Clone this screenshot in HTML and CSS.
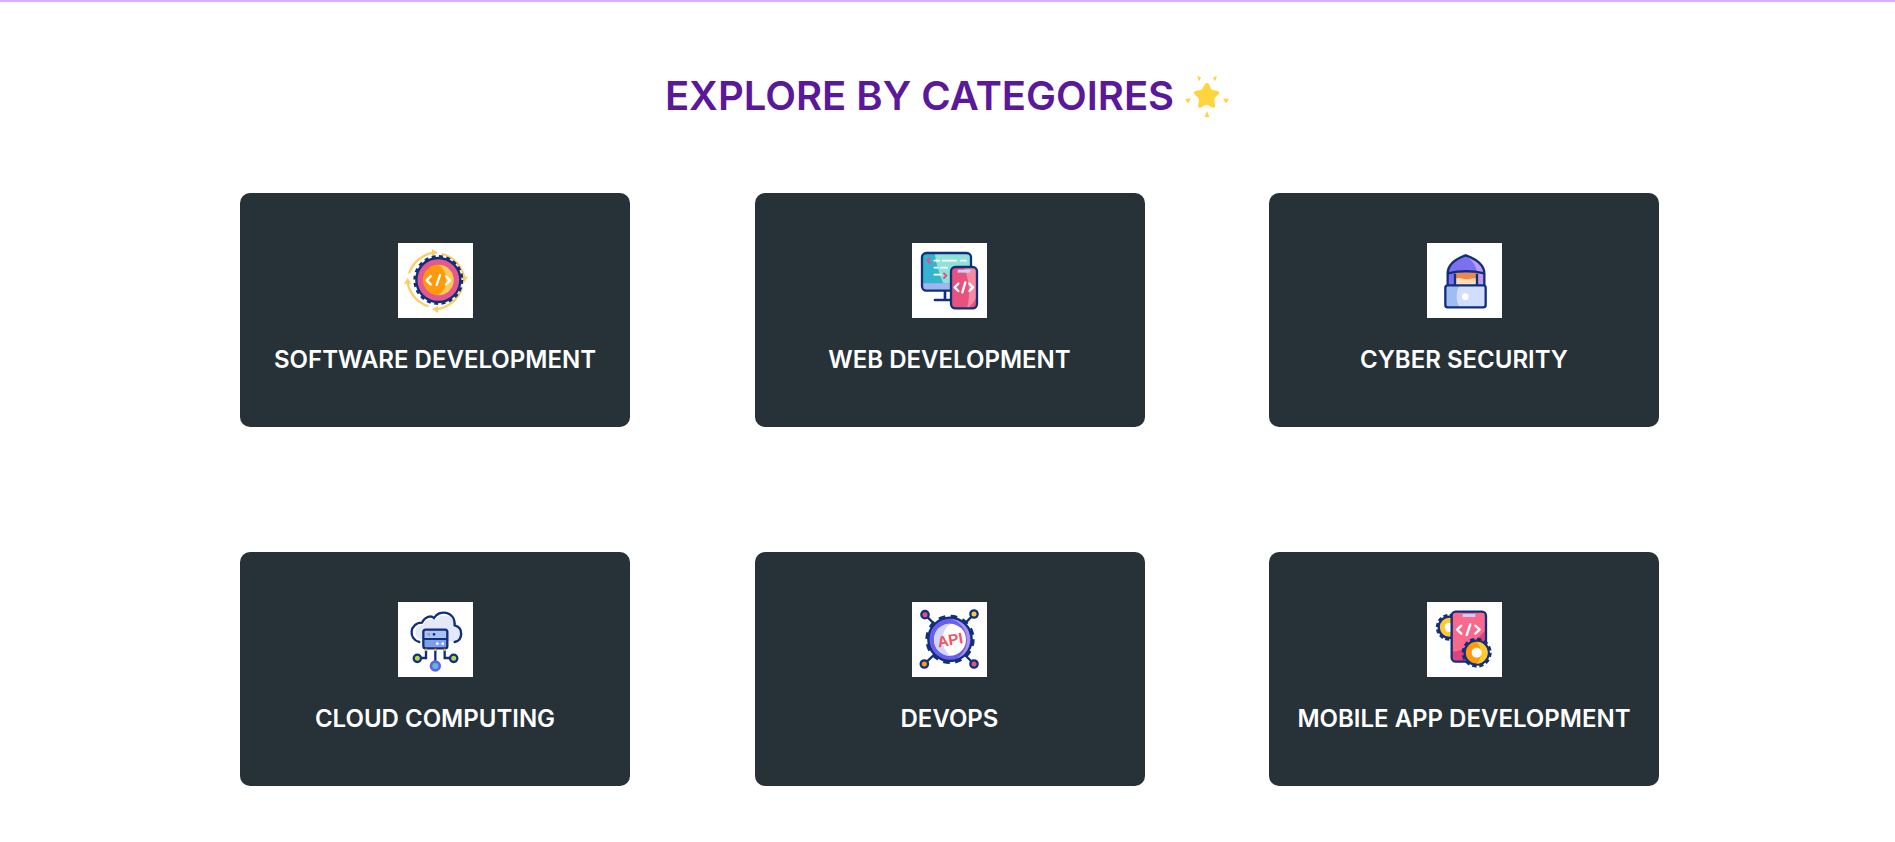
FILE: index.html
```html
<!DOCTYPE html>
<html lang="en">
<head>
<meta charset="utf-8">
<title>Explore by categories</title>
<link rel="stylesheet" href="styles.css">
</head>
<body>
<main class="page">
  <h1 class="title">EXPLORE BY CATEGOIRES
    <svg class="star" viewBox="0 0 46 44" aria-hidden="true">
      <path d="M23 9c2 0 2.500 2 3.500 5 .6 1.500 1.500 2 3 2.200 3 .4 5.500.6 5.800 2.300.2 1.500-2 3-4 5-1.200 1.200-1.300 2-1 3.500.6 3 1.400 5.500 0 6.500-1.400.9-3.500-.8-6-2.200-1.200-.7-2.200-.7-3.400 0-2.500 1.400-4.600 3.100-6 2.200-1.400-1-.6-3.500 0-6.500.3-1.500.2-2.300-1-3.500-2-2-4.200-3.500-4-5 .3-1.700 2.800-1.900 5.800-2.300 1.500-.2 2.400-.7 3-2.200C20.500 11 21 9 23 9z" fill="#ffd53d"/>
      <g fill="#ffd53d"><path d="M13 2l4 1.500-2 4z"/><path d="M33 2l-4 1.500 2 4z"/><path d="M1 25l6-.5-3 5z"/><path d="M45 25l-6-.5 3 5z"/><path d="M23 37l2.500 6h-5z"/></g>
    </svg>
  </h1>
  <section class="grid">
    <article class="card">
      <svg class="icon" viewBox="0 0 225 225" aria-hidden="true">
        <rect width="225" height="225" fill="#fff"/>
        <g fill="none" stroke="#ffcd66" stroke-width="7" stroke-linecap="round">
          <path d="M34 89A92 92 0 0 1 108 29"/><path d="M134 33A92 92 0 0 1 199 104"/><path d="M192 133A92 92 0 0 1 115 199"/><path d="M89 189A92 92 0 0 1 29 120"/>
        </g>
        <g fill="#ffcd66"><path d="M102 18l18 11-18 11z"/><path d="M188 101h22l-11 17z"/><path d="M120 188l-18 11 18 11z"/><path d="M18 122h22l-11-18z"/></g>
        <circle cx="121" cy="111" r="71" fill="none" stroke="#12307a" stroke-width="8" stroke-dasharray="12 10.300"/>
        <circle cx="121" cy="111" r="66" fill="#e4588f" stroke="#12307a" stroke-width="7"/>
        <path d="M170 65a66 66 0 0 1 0 92 66 66 0 0 0 0-92z" fill="#ee6f9b"/>
        <circle cx="121" cy="111" r="46" fill="#ff9a0d"/>
        <path d="M121 65a46 46 0 0 1 0 92c16-10 24-26 24-46s-8-36-24-46z" fill="#ffcb57"/>
        <g fill="none" stroke="#fff" stroke-width="7" stroke-linecap="round" stroke-linejoin="round"><path d="M98 100l-12 12 12 12"/><path d="M144 100l12 12-12 12"/><path d="M126 96l-10 30"/></g>
      </svg>
      <h2 class="label">SOFTWARE DEVELOPMENT</h2>
    </article>
    <article class="card">
      <svg class="icon" viewBox="0 0 225 225" aria-hidden="true">
        <rect width="225" height="225" fill="#fff"/>
        <path d="M99 143v28M69 171h50" stroke="#12307a" stroke-width="8" stroke-linecap="round"/>
        <rect x="30" y="30" width="147" height="113" rx="13" fill="#35b4cf"/>
        <path d="M68 30h96q13 0 13 13v78H94C80 90 72 60 68 30z" fill="#8fe2da"/>
        <path d="M30 121h147v9q0 13-13 13H43q-13 0-13-13z" fill="#a1b5ef"/>
        <rect x="30" y="30" width="147" height="113" rx="13" fill="none" stroke="#12307a" stroke-width="7"/>
        <g fill="none" stroke="#e64f86" stroke-width="6" stroke-linecap="round" stroke-linejoin="round"><path d="M53 46l-7 7 7 7"/><path d="M96 91l7 7-7 7"/></g>
        <g stroke="#fff" stroke-width="5" stroke-linecap="round"><path d="M67 53h15M92 53h40M146 53h16M67 74h10M87 74h18M67 95h20"/></g>
        <rect x="117" y="72" width="78" height="124" rx="13" fill="#e9527f"/>
        <path d="M155 72h27q13 0 13 13v75c-10 20-20 30-30 36 12-40 6-90-10-124z" fill="#f78aa3"/>
        <rect x="117" y="72" width="78" height="124" rx="13" fill="none" stroke="#12307a" stroke-width="7"/>
        <rect x="137" y="80" width="38" height="9" fill="#c7d0f5"/>
        <g fill="none" stroke="#fff" stroke-width="7" stroke-linecap="round" stroke-linejoin="round"><path d="M139 122l-11 11 11 11"/><path d="M172 122l11 11-11 11"/><path d="M160 118l-9 30"/></g>
      </svg>
      <h2 class="label">WEB DEVELOPMENT</h2>
    </article>
    <article class="card">
      <svg class="icon" viewBox="0 0 225 225" aria-hidden="true">
        <rect width="225" height="225" fill="#fff"/>
        <path d="M62 126V92C62 62 90 46 116 37c26 9 56 25 56 55v34z" fill="#7c70f0"/>
        <path d="M116 37c26 9 56 25 56 55v34h-22V92c0-20-14-40-34-55z" fill="#bd9cef"/>
        <path d="M62 126V92C62 62 90 46 116 37c26 9 56 25 56 55v34" fill="none" stroke="#12307a" stroke-width="7"/>
        <rect x="84" y="90" width="66" height="36" fill="#ffdcb5"/>
        <path d="M84 90h66v18c-12-6-20 2-33 1s-20-7-33-1z" fill="#ee8748"/>
        <path d="M62 91c34-8 76-8 110 0" fill="none" stroke="#12307a" stroke-width="7"/>
        <path d="M84 92v34M150 92v34" stroke="#12307a" stroke-width="7"/>
        <rect x="55" y="127" width="121" height="66" rx="7" fill="#d3defc"/>
        <path d="M62 127h36c-12 18-12 48 0 66H62q-7 0-7-7v-52q0-7 7-7z" fill="#9fbdf3"/>
        <rect x="55" y="127" width="121" height="66" rx="7" fill="none" stroke="#12307a" stroke-width="7"/>
        <circle cx="115" cy="161" r="10" fill="#fff"/>
      </svg>
      <h2 class="label">CYBER SECURITY</h2>
    </article>
    <article class="card">
      <svg class="icon" viewBox="0 0 225 225" aria-hidden="true">
        <rect width="225" height="225" fill="#fff"/>
        <path d="M68 112c-24-8-20-42 8-44 10-20 28-18 36-12 12-26 62-20 62 18 22 8 22 38-4 44z" fill="#e3e9fb"/>
        <path d="M64 120C30 112 34 62 72 62 82 42 100 40 108 48c14-26 64-22 62 22 26 6 26 44 0 50" fill="none" stroke="#12307a" stroke-width="7" stroke-linecap="round"/>
        <rect x="76" y="83" width="72" height="56" rx="7" fill="#809fea"/>
        <rect x="76" y="83" width="72" height="28" rx="7" fill="#abc0f3"/>
        <rect x="76" y="83" width="72" height="56" rx="7" fill="none" stroke="#12307a" stroke-width="7"/>
        <path d="M76 111h72" stroke="#12307a" stroke-width="6"/>
        <circle cx="92" cy="97" r="4" fill="#8b95b8"/><circle cx="108" cy="97" r="4" fill="#12307a"/>
        <circle cx="118" cy="125" r="4" fill="#fff"/><circle cx="134" cy="125" r="4" fill="#fff"/>
        <path d="M84 141v27H70M112 141v38M140 141v27h14" fill="none" stroke="#12307a" stroke-width="7"/>
        <path d="M84 140v7M112 140v7M140 140v7" stroke="#ffb52e" stroke-width="7"/>
        <circle cx="58" cy="169" r="11" fill="#b6d63c" stroke="#12307a" stroke-width="7"/>
        <circle cx="167" cy="169" r="11" fill="#b6d63c" stroke="#12307a" stroke-width="7"/>
        <circle cx="112" cy="192" r="13" fill="#4ec3c9" stroke="#6a5de8" stroke-width="8"/>
      </svg>
      <h2 class="label">CLOUD COMPUTING</h2>
    </article>
    <article class="card">
      <svg class="icon" viewBox="0 0 225 225" aria-hidden="true">
        <rect width="225" height="225" fill="#fff"/>
        <path d="M39 38l40 40M186 36l-38 40M37 186l40-38M186 186l-38-38" stroke="#12307a" stroke-width="7"/>
        <circle cx="39" cy="38" r="11" fill="#e64f86" stroke="#12307a" stroke-width="7"/>
        <circle cx="186" cy="36" r="11" fill="#ffc933" stroke="#12307a" stroke-width="7"/>
        <circle cx="37" cy="186" r="11" fill="#ff9a0d" stroke="#12307a" stroke-width="7"/>
        <circle cx="186" cy="186" r="11" fill="#e64f86" stroke="#12307a" stroke-width="7"/>
        <circle cx="114" cy="112" r="70" fill="none" stroke="#12307a" stroke-width="8" stroke-dasharray="20 16.650"/>
        <circle cx="114" cy="112" r="65" fill="#6a5ef0" stroke="#12307a" stroke-width="7"/>
        <path d="M114 50a62 62 0 0 1 20 120 66 66 0 0 0-20-120z" fill="#ac93ee"/>
        <circle cx="114" cy="113" r="48" fill="#fff"/>
        <path d="M114 65a48 48 0 0 0 0 96 62 62 0 0 1 0-96z" fill="#cfd5fa"/>
        <text class="api" x="114" y="130" transform="rotate(-10 114 112)" text-anchor="middle">API</text>
      </svg>
      <h2 class="label">DEVOPS</h2>
    </article>
    <article class="card">
      <svg class="icon" viewBox="0 0 225 225" aria-hidden="true">
        <rect width="225" height="225" fill="#fff"/>
        <circle cx="67" cy="76" r="37" fill="none" stroke="#12307a" stroke-width="7" stroke-dasharray="12 7.400"/>
        <circle cx="67" cy="76" r="32" fill="#ffc933" stroke="#12307a" stroke-width="7"/>
        <circle cx="67" cy="76" r="14" fill="#fff"/>
        <rect x="74" y="29" width="103" height="150" rx="12" fill="#f9688d"/>
        <path d="M74 150c30 0 60-24 103-65v82q0 12-12 12H86q-12 0-12-12z" fill="#e0417f"/>
        <rect x="74" y="29" width="103" height="150" rx="12" fill="none" stroke="#12307a" stroke-width="7"/>
        <rect x="107" y="36" width="38" height="9" fill="#c7d0f5"/>
        <g fill="none" stroke="#fff" stroke-width="7" stroke-linecap="round" stroke-linejoin="round"><path d="M103 71l-13 12 13 12"/><path d="M145 71l13 12-13 12"/><path d="M130 67l-11 32"/></g>
        <circle cx="149" cy="152" r="41" fill="none" stroke="#12307a" stroke-width="8" stroke-dasharray="13 8.470"/>
        <circle cx="149" cy="152" r="36" fill="#ff9a0d" stroke="#12307a" stroke-width="7"/>
        <path d="M149 119a33 33 0 0 1 0 66 50 50 0 0 0 0-66z" fill="#ffc933"/>
        <circle cx="149" cy="152" r="15" fill="#fff"/>
      </svg>
      <h2 class="label">MOBILE APP DEVELOPMENT</h2>
    </article>
  </section>
</main>
</body>
</html>
```

FILE: styles.css
```css
* { box-sizing: border-box; }
html, body { margin: 0; background: #fff; }
.page {
  min-height: 842px;
  border-top: 2px solid #e0aaff;
  font-family: Inter, "Liberation Sans", sans-serif;
  overflow: hidden;
}
.title {
  margin: 0;
  padding-top: 68px;
  height: 191px;
  display: flex;
  justify-content: center;
  align-items: flex-start;
  gap: 10px;
  color: #5a189a;
  font-size: 40px;
  line-height: 52px;
  font-weight: 600;
  white-space: nowrap;
}
.star { width: 46px; height: 44px; flex: none; margin-top: 4px; }
.grid {
  display: grid;
  grid-template-columns: repeat(3, 390px);
  column-gap: 124.5px;
  row-gap: 125px;
  justify-content: center;
  padding-left: 4px;
}
.card {
  height: 234px;
  background: #263238;
  border-radius: 10px;
  display: flex;
  flex-direction: column;
  align-items: center;
  padding-top: 50px;
}
.icon { width: 75px; height: 75px; display: block; }
.label {
  margin: 26px 0 0;
  color: #fff;
  font-size: 24px;
  line-height: 32px;
  font-weight: 600;
  white-space: nowrap;
}
.api { font: 700 46px "Liberation Sans", sans-serif; fill: #f4525f; }
```
